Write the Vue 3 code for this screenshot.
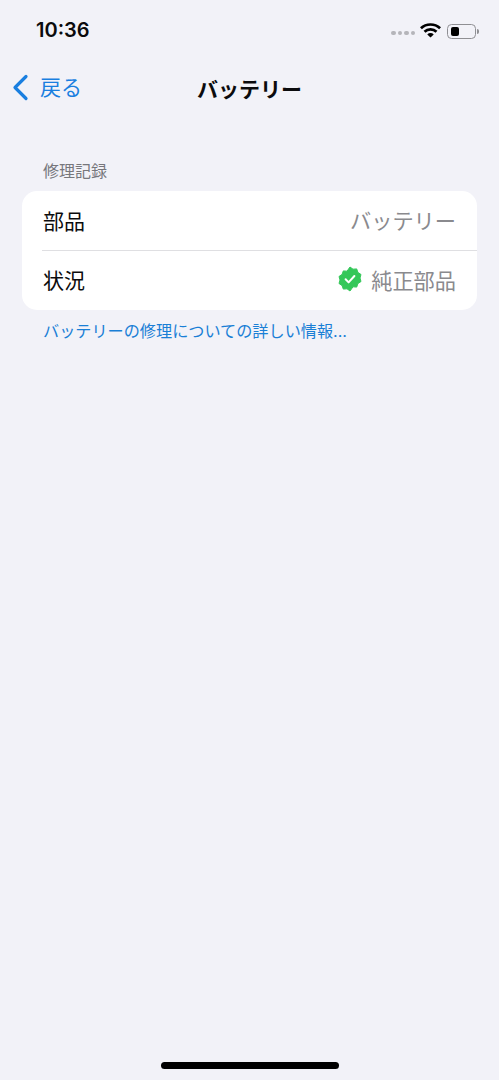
<script setup>
const dots = [1, 2, 3, 4]
</script>

<template>
  <div class="screen">
    <div class="status">
      <span class="time">10:36</span>
      <div class="status-right">
        <div class="dots"><i v-for="d in dots" :key="d"></i></div>
        <svg class="wifi" width="21" height="15" viewBox="0 0 20 15" preserveAspectRatio="none">
          <path d="M10 14.6 6.9 11.4a4.4 4.4 0 0 1 6.2 0Z" fill="#000"/>
          <path d="M5.2 9.7 3.4 7.8a9.3 9.3 0 0 1 13.2 0l-1.8 1.9a6.8 6.8 0 0 0-9.6 0Z" fill="#000"/>
          <path d="M1.8 6.2 0 4.3a14.2 14.2 0 0 1 20 0l-1.8 1.9a11.7 11.7 0 0 0-16.4 0Z" fill="#000"/>
        </svg>
        <div class="battery"><div class="battery-body"><div class="battery-fill"></div></div><div class="battery-cap"></div></div>
      </div>
    </div>

    <div class="nav">
      <div class="back">
        <svg width="18" height="27" viewBox="0 0 18 27">
          <path d="M15 2.5 4 13.5 15 24.5" fill="none" stroke="#1a7fe0" stroke-width="3.2" stroke-linecap="round" stroke-linejoin="round"/>
        </svg>
        <span>戻る</span>
      </div>
      <div class="title">バッテリー</div>
    </div>

    <div class="section-label">修理記録</div>
    <div class="card">
      <div class="row">
        <span class="key">部品</span>
        <span class="val">バッテリー</span>
      </div>
      <div class="sep"></div>
      <div class="row row-status">
        <span class="key">状況</span>
        <span class="val status-val">
          <svg width="26" height="26" viewBox="0 0 26 26">
            <path d="M13 1l3 2.2 3.7-.3 1.2 3.5 3.1 2.1-1 3.5 1 3.5-3.1 2.1-1.2 3.5-3.7-.3L13 25l-3-2.2-3.7.3-1.2-3.5-3.1-2.1 1-3.5-1-3.5 3.1-2.1 1.2-3.5 3.7.3Z" fill="#34c759" stroke="#34c759" stroke-width="1" stroke-linejoin="round"/>
            <path d="M8.6 13.3l3 3.1 5.8-6.4" fill="none" stroke="#fff" stroke-width="2" stroke-linecap="round" stroke-linejoin="round"/>
          </svg>
          <span>純正部品</span>
        </span>
      </div>
    </div>
    <div class="link">バッテリーの修理についての詳しい情報...</div>

    <div class="spacer"></div>
    <div class="home-wrap"><div class="home"></div></div>
  </div>
</template>

<style>
html, body { margin: 0; background: #f2f2f8; }
</style>

<style scoped>
.screen {
  width: 499px;
  height: 1080px;
  background: #f2f2f8;
  display: flex;
  flex-direction: column;
  font-family: "Inter", "Noto Sans CJK JP", sans-serif;
  overflow: hidden;
  box-sizing: border-box;
}
.status {
  height: 60px;
  display: flex;
  align-items: center;
  justify-content: space-between;
  padding: 0 20px 0 36px;
  box-sizing: border-box;
}
.time { font-size: 20px; font-weight: 600; color: #0b0b0d; }
.status-right { display: flex; align-items: center; }
.dots { display: flex; gap: 2px; margin-right: 5px; margin-top: 6px; }
.dots i { width: 4.5px; height: 4.5px; border-radius: 50%; background: #b5b5ba; display: block; }
.wifi { margin-right: 6px; margin-top: 0; }
.battery { display: flex; align-items: center; margin-top: 2px; }
.battery-body {
  width: 29px; height: 15px; border: 1px solid #8f8f93; border-radius: 4.5px;
  padding: 2px 2px 2px 3px; box-sizing: border-box;
}
.battery-fill { width: 8px; height: 100%; background: #000; border-radius: 2px; }
.battery-cap { width: 2px; height: 5px; background: #8f8f93; border-radius: 0 2px 2px 0; margin-left: 1px; }
.nav {
  height: 56px;
  position: relative;
  display: flex;
  align-items: center;
  justify-content: center;
}
.back {
  position: absolute;
  left: 11px; top: 14px;
  display: flex;
  align-items: center;
  gap: 11px;
  color: #1a7fe0;
  font-size: 21px;
  line-height: 27px;
}
.title { font-size: 21px; font-weight: 700; color: #0b0b0d; }
.section-label {
  margin: 45px 0 0 43px;
  font-size: 16px;
  line-height: 20px;
  color: #77777c;
}
.card {
  margin: 10px 22px 0;
  background: #fff;
  border-radius: 15px;
}
.row {
  height: 59px;
  display: flex;
  align-items: center;
  justify-content: space-between;
  padding: 0 21px 2px 21px;
  box-sizing: border-box;
}
.row-status { padding-bottom: 3px; }
.key { font-size: 21px; color: #0b0b0d; }
.val { font-size: 21.2px; color: #8a8a8e; }
.status-val { display: flex; align-items: center; gap: 8px; }
.sep { height: 1px; background: #dfdfe2; margin-left: 20px; }
.link {
  margin: 11px 0 0 43px;
  font-size: 16.15px;
  line-height: 20px;
  color: #1a7fd6;
}
.spacer { flex: 1; }
.home-wrap { height: 18px; display: flex; justify-content: center; }
.home { width: 178px; height: 7px; background: #000; border-radius: 4px; }
</style>
